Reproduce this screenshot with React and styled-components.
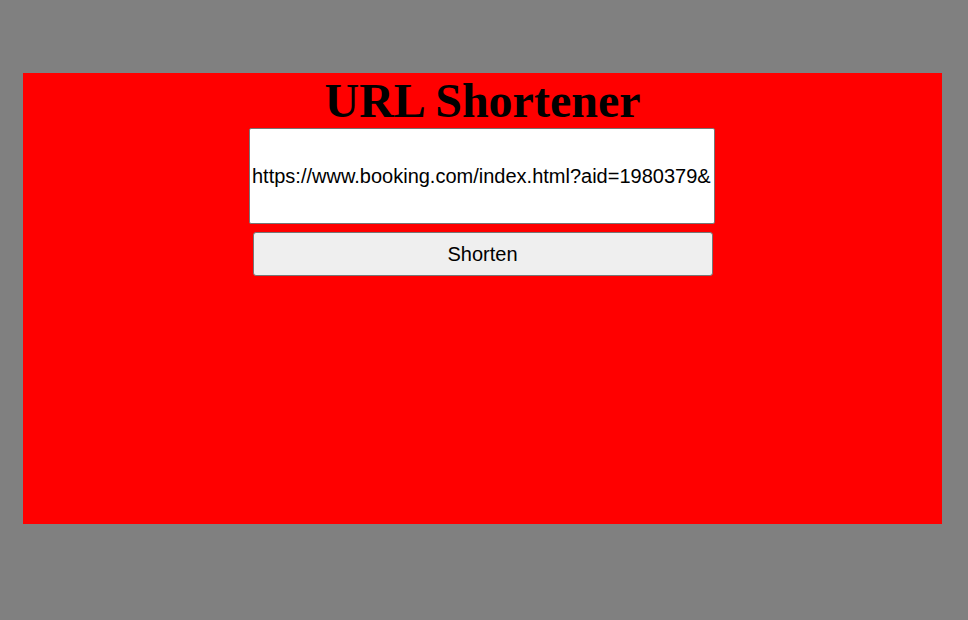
import React, { useState } from "react";
import styled, { createGlobalStyle } from "styled-components";

const GlobalStyle = createGlobalStyle`
  html, body {
    margin: 0;
    padding: 0;
    background-color: #808080;
  }
`;

const Panel = styled.main`
  box-sizing: border-box;
  width: 919px;
  height: 451px;
  margin: 73px 0 0 23px;
  background-color: #ff0000;
  display: flex;
  flex-direction: column;
  align-items: center;
`;

const Title = styled.h1`
  margin: 0;
  font-family: "Liberation Serif", "Times New Roman", serif;
  font-size: 48px;
  line-height: 55px;
  font-weight: bold;
  color: #000;
`;

const UrlInput = styled.input`
  box-sizing: border-box;
  width: 466px;
  height: 96px;
  margin-right: 1px;
  padding: 1px 2px;
  border: 1px solid #767676;
  border-radius: 2px;
  background: #fff;
  font-family: "Liberation Sans", Arial, sans-serif;
  font-size: 20px;
  color: #000;
  outline: none;
`;

const ShortenButton = styled.button`
  box-sizing: border-box;
  width: 460px;
  height: 44px;
  margin-top: 8px;
  border: 1px solid #767676;
  border-radius: 3px;
  background-color: #efefef;
  font-family: "Liberation Sans", Arial, sans-serif;
  font-size: 20px;
  color: #000;
  cursor: pointer;
`;

export default function App() {
  const [url, setUrl] = useState("https://www.booking.com/index.html?aid=1980379&");

  return (
    <>
      <GlobalStyle />
      <Panel>
        <Title>URL Shortener</Title>
        <UrlInput value={url} onChange={(e) => setUrl(e.target.value)} />
        <ShortenButton>Shorten</ShortenButton>
      </Panel>
    </>
  );
}
